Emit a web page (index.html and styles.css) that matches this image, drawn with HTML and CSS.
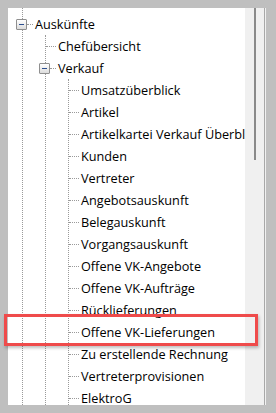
FILE: index.html
```html
<!DOCTYPE html>
<html lang="de">
<head>
  <meta charset="UTF-8">
  <title>Auskünfte</title>
  <link rel="stylesheet" href="styles.css">
</head>
<body>
  <div class="window">
    <!-- Tree view -->
    <div class="tree">
      <ul class="branch root">
        <li>
          <div class="row">
            <span class="toggle"></span>
            <span class="dash"></span>
            <span class="label">Auskünfte</span>
          </div>
          <ul class="branch">
            <li>
              <div class="row"><span class="dash"></span><span class="label">Chefübersicht</span></div>
            </li>
            <li>
              <div class="row">
                <span class="toggle"></span>
                <span class="dash"></span>
                <span class="label">Verkauf</span>
              </div>
              <ul class="branch">
                <li><div class="row"><span class="dash"></span><span class="label">Umsatzüberblick</span></div></li>
                <li><div class="row"><span class="dash"></span><span class="label">Artikel</span></div></li>
                <li><div class="row"><span class="dash"></span><span class="label">Artikelkartei Verkauf Überblick</span></div></li>
                <li><div class="row"><span class="dash"></span><span class="label">Kunden</span></div></li>
                <li><div class="row"><span class="dash"></span><span class="label">Vertreter</span></div></li>
                <li><div class="row"><span class="dash"></span><span class="label">Angebotsauskunft</span></div></li>
                <li><div class="row"><span class="dash"></span><span class="label">Belegauskunft</span></div></li>
                <li><div class="row"><span class="dash"></span><span class="label">Vorgangsauskunft</span></div></li>
                <li><div class="row"><span class="dash"></span><span class="label">Offene VK-Angebote</span></div></li>
                <li><div class="row"><span class="dash"></span><span class="label">Offene VK-Aufträge</span></div></li>
                <li><div class="row"><span class="dash"></span><span class="label">Rücklieferungen</span></div></li>
                <li><div class="row"><span class="dash"></span><span class="label">Offene VK-Lieferungen</span></div></li>
                <li><div class="row"><span class="dash"></span><span class="label">Zu erstellende Rechnung</span></div></li>
                <li><div class="row"><span class="dash"></span><span class="label">Vertreterprovisionen</span></div></li>
                <li><div class="row"><span class="dash"></span><span class="label">ElektroG</span></div></li>
              </ul>
            </li>
          </ul>
        </li>
      </ul>
    </div>
    <!-- Scrollbar -->
    <div class="scroll">
      <div class="thumb"></div>
      <div class="groove"></div>
    </div>
  </div>
  <!-- Highlight annotation -->
  <div class="highlight"></div>
</body>
</html>
```

FILE: styles.css
```css
* {
  margin: 0;
  padding: 0;
  box-sizing: border-box;
}
body {
  background: #bfbfbf;
  font-family: "Open Sans", "Noto Sans", sans-serif;
  font-size: 12.7px;
  color: #000;
}
.window {
  display: flex;
  height: 413px;
  padding: 8px 0 8px 8px;
}
/* Tree panel */
.tree {
  width: 237px;
  height: 397px;
  background: #fff;
  overflow: hidden;
}
ul {
  list-style: none;
}
.branch {
  margin-left: 22px;
  border-left: 1px dotted #9a9a9a;
}
.root {
  margin-left: 14px;
  padding-top: 5px;
  min-height: 100%;
}
li {
  position: relative;
}
.row {
  display: flex;
  align-items: center;
  height: 22px;
  white-space: nowrap;
}
.dash {
  flex: none;
  width: 10px;
  border-top: 1px dotted #9a9a9a;
}
.label {
  margin-left: 2px;
  line-height: 22px;
}
/* Expand / collapse box sitting on the tree line */
.toggle {
  position: absolute;
  left: -7px;
  top: 6px;
  width: 11px;
  height: 11px;
  border: 1px solid #8f8f8f;
  border-radius: 1px;
  background: linear-gradient(#fff, #dcdcdc);
}
.toggle::after {
  content: "";
  position: absolute;
  left: 2px;
  top: 4px;
  width: 5px;
  height: 1px;
  background: #2d4f8f;
}
.toggle + .dash {
  margin-left: 4px;
  width: 6px;
}
/* Scrollbar strip */
.scroll {
  display: flex;
  width: 21px;
  height: 397px;
  background: #f0f0f0;
}
.thumb {
  width: 2px;
  height: 152px;
  margin-left: 9px;
  background: #8a8a8a;
}
.groove {
  width: 1px;
  margin-left: 8px;
  background: #a8a8a8;
}
/* Red annotation box */
.highlight {
  position: absolute;
  left: 4px;
  top: 314px;
  width: 254px;
  height: 32px;
  border: 3px solid #ef4b4b;
  box-shadow: 1px 2px 3px rgba(0, 0, 0, 0.25);
}
```
